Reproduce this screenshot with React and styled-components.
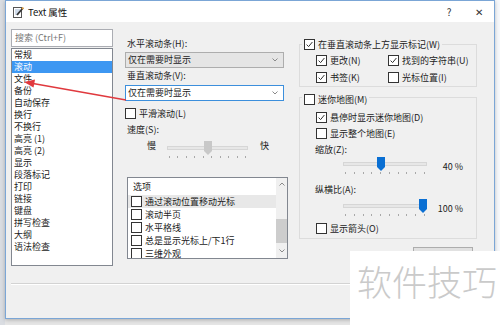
import React from 'react';
import styled, { createGlobalStyle } from 'styled-components';

const GlobalStyle = createGlobalStyle`
  html, body {
    margin: 0;
    padding: 0;
  }
  body {
    width: 500px;
    height: 325px;
    overflow: hidden;
    background: #e6e6e6;
    font-family: "Noto Sans CJK SC", "Noto Sans", sans-serif;
    font-size: 9px;
    color: #222;
  }
`;

const Screen = styled.div`
  position: relative;
  width: 500px;
  height: 325px;
  padding-left: 5px;
  box-sizing: border-box;
  background: linear-gradient(to right, #dadde2 0 5px, #e6e6e6 5px 495px, #f7f9fc 495px);
`;

const Dialog = styled.div`
  width: 490px;
  height: 319px;
  box-sizing: border-box;
  border: 1px solid #7ba6d6;
  background: #f0f0f0;
  display: flex;
  flex-direction: column;
  box-shadow: 0 1px 4px rgba(0, 0, 0, 0.25);
`;

const TitleBar = styled.div`
  height: 21px;
  background: #fff;
  display: flex;
  align-items: center;
  padding-left: 7px;
`;

const TitleText = styled.span`
  margin-left: 4px;
  font-size: 9.5px;
  color: #111;
`;

const CaptionButton = styled.div`
  width: 30px;
  height: 21px;
  display: flex;
  align-items: center;
  justify-content: center;
  color: #333;
  font-size: 10px;
  &:first-of-type {
    margin-left: auto;
  }
`;

const Body = styled.div`
  flex: 1;
  display: flex;
  flex-direction: column;
  padding: 7px 6px 0 5px;
`;

const Main = styled.div`
  display: flex;
  align-items: flex-start;
`;

const Sidebar = styled.div`
  width: 102px;
  display: flex;
  flex-direction: column;
`;

const SearchBox = styled.div`
  height: 18px;
  box-sizing: border-box;
  border: 1px solid #abadb3;
  background: #fff;
  padding-left: 3px;
  line-height: 16px;
  color: #777;
`;

const ListBox = styled.div`
  margin-top: 1px;
  height: 218px;
  box-sizing: border-box;
  border: 1px solid #828790;
  background: #fff;
`;

const ListItem = styled.div`
  height: 12px;
  line-height: 12px;
  padding-left: 2px;
  background: ${(p) => (p.$selected ? '#3d97f2' : 'transparent')};
  color: ${(p) => (p.$selected ? '#fff' : '#222')};
`;

const Middle = styled.div`
  margin-left: 12px;
  width: 163px;
  padding-top: 8px;
  display: flex;
  flex-direction: column;
`;

const FieldLabel = styled.div`
  height: ${(p) => p.$h || 14}px;
  line-height: ${(p) => p.$h || 14}px;
  margin-top: ${(p) => p.$mt || 0}px;
  padding-left: ${(p) => p.$indent || 2}px;
`;

const Dropdown = styled.div`
  width: 159px;
  height: 16px;
  box-sizing: border-box;
  margin-top: ${(p) => p.$mt || 0}px;
  border: 1px solid ${(p) => (p.$focused ? '#3c8fdc' : '#adadad')};
  background: ${(p) => (p.$focused ? '#fff' : '#e5e5e5')};
  display: flex;
  align-items: center;
  justify-content: space-between;
  padding: 0 5px 0 2px;
  line-height: 14px;
`;

const CheckRow = styled.div`
  display: flex;
  align-items: center;
  gap: 3px;
  height: ${(p) => p.$h || 14}px;
  margin-top: ${(p) => p.$mt || 0}px;
  padding-left: ${(p) => p.$indent || 0}px;
  white-space: nowrap;
`;

const Box = styled.span`
  width: 9px;
  height: 9px;
  flex: none;
  border: 1px solid #333;
  background: #fff;
  display: flex;
  align-items: center;
  justify-content: center;
`;

const SliderRow = styled.div`
  display: flex;
  align-items: flex-start;
  height: 18px;
  margin-top: ${(p) => p.$mt || 0}px;
  padding-left: ${(p) => p.$indent || 0}px;
`;

const EndLabel = styled.span`
  width: 9px;
  line-height: 14px;
  margin: ${(p) => p.$margin};
`;

const Track = styled.div`
  width: ${(p) => p.$w}px;
  display: flex;
  flex-direction: column;
`;

const RailArea = styled.div`
  position: relative;
  height: 14px;
  &::before {
    content: '';
    position: absolute;
    left: 0;
    right: 0;
    top: 5px;
    height: 2px;
    background: #e7e7e7;
    border: 1px solid #d6d6d6;
  }
`;

const ThumbWrap = styled.div`
  position: absolute;
  top: 0;
  width: 8px;
  height: 14px;
  margin-left: -4px;
`;

const Ticks = styled.div`
  margin-top: 1px;
  display: flex;
  justify-content: space-between;
  padding: 0 2px;
  span {
    width: 1px;
    height: 2px;
    background: #a8a8a8;
  }
`;

const SliderValue = styled.span`
  width: 36px;
  margin-top: 3px;
  line-height: 14px;
  text-align: right;
`;

const OptionsList = styled.div`
  margin: 18px 0 0 2px;
  width: 161px;
  height: 82px;
  box-sizing: border-box;
  border: 1px solid #828790;
  background: #fff;
  display: flex;
  overflow: hidden;
`;

const OptionsBody = styled.div`
  flex: 1;
  padding-top: 1px;
`;

const OptionsHeader = styled.div`
  height: 16px;
  line-height: 16px;
  padding-left: 5px;
`;

const OptionRow = styled.div`
  height: 13px;
  display: flex;
  align-items: center;
  gap: 3px;
  padding-left: 3px;
  background: ${(p) => (p.$hover ? '#e8e8e8' : 'transparent')};
  white-space: nowrap;
`;

const Scrollbar = styled.div`
  width: 11px;
  background: #f0f0f0;
  display: flex;
  flex-direction: column;
  align-items: center;
  padding-top: 4px;
`;

const ScrollThumb = styled.div`
  width: 11px;
  height: 24px;
  margin: 33px 0 6px;
  background: #cdcdcd;
`;

const Right = styled.div`
  margin-left: 11px;
  width: 178px;
  display: flex;
  flex-direction: column;
`;

const Group = styled.div`
  margin-top: ${(p) => p.$mt}px;
  border: 1px solid #dcdcdc;
  padding-bottom: ${(p) => p.$pb || 0}px;
  display: flex;
  flex-direction: column;
`;

const GroupHeader = styled(CheckRow)`
  height: 12px;
  width: fit-content;
  margin: ${(p) => p.$top}px 0 0 2px;
  padding: 0 2px;
  background: #f0f0f0;
`;

const CheckGrid = styled.div`
  margin-top: 2px;
  padding-left: 16px;
  display: grid;
  grid-template-columns: 72px auto;
  grid-auto-rows: 17px;
`;

const PushButton = styled.div`
  margin: 8px 0 0 114px;
  width: 60px;
  height: 22px;
  box-sizing: border-box;
  border: 1px solid #adadad;
  background: #e1e1e1;
`;

const Separator = styled.div`
  margin-top: auto;
  height: 1px;
  border-top: 1px solid #d3d3d3;
  background: #fff;
`;

const Footer = styled.div`
  height: 33px;
`;

const Watermark = styled.div`
  position: absolute;
  right: 0;
  bottom: 0;
  width: 150px;
  height: 74px;
  box-sizing: border-box;
  background: #fff;
  padding: 12px 0 0 7px;
  font-family: "Noto Sans CJK SC", sans-serif;
  font-weight: 300;
  font-size: 35px;
  line-height: 36px;
  color: #cacaca;
  white-space: nowrap;
`;

const Overlay = styled.svg`
  position: absolute;
  left: 0;
  top: 0;
  pointer-events: none;
`;

const Check = ({ checked }) => (
  <Box>
    {checked && (
      <svg width="7" height="7" viewBox="0 0 7 7">
        <path d="M0.6 3.6 L2.6 5.6 L6.4 1" fill="none" stroke="#333" strokeWidth="1" />
      </svg>
    )}
  </Box>
);

const Chevron = ({ up }) => (
  <svg width="6" height="4" viewBox="0 0 6 4">
    <path d={up ? 'M0.5 3.5 L3 1 L5.5 3.5' : 'M0.5 0.5 L3 3 L5.5 0.5'} fill="none" stroke="#8a8a8a" strokeWidth="1" />
  </svg>
);

const Slider = ({ width, value, blue }) => (
  <Track $w={width}>
    <RailArea>
      <ThumbWrap style={{ left: `${value}%` }}>
        <svg width="8" height="14" viewBox="0 0 8 14">
          <path d="M0 0 H8 V10 L4 14 L0 10 Z" fill={blue ? '#0a6fd3' : '#c8c8c8'} />
        </svg>
      </ThumbWrap>
    </RailArea>
    <Ticks>
      {Array.from({ length: 10 }).map((_, i) => (
        <span key={i} />
      ))}
    </Ticks>
  </Track>
);

const NotepadIcon = () => (
  <svg width="11" height="12" viewBox="0 0 11 12">
    <rect x="0.5" y="1.5" width="8" height="10" fill="#fff" stroke="#555" />
    <path d="M2 4 H7 M2 6 H6 M2 8 H5" stroke="#8aa4c8" strokeWidth="0.8" />
    <path d="M4 9 L10 2" stroke="#333" strokeWidth="1.8" />
    <path d="M9 3 L10.3 1.5" stroke="#e2a03f" strokeWidth="1.8" />
  </svg>
);

const categories = [
  '常规', '滚动', '文件', '备份', '自动保存', '换行', '不换行', '高亮 (1)', '高亮 (2)',
  '显示', '段落标记', '打印', '链接', '键盘', '拼写检查', '大纲', '语法检查',
];

const options = ['通过滚动位置移动光标', '滚动半页', '水平格线', '总是显示光标上/下1行', '三维外观'];

export default function App() {
  return (
    <Screen>
      <GlobalStyle />
      <Dialog>
        <TitleBar>
          <NotepadIcon />
          <TitleText>Text 属性</TitleText>
          <CaptionButton>?</CaptionButton>
          <CaptionButton>✕</CaptionButton>
        </TitleBar>
        <Body>
          <Main>
            <Sidebar>
              <SearchBox>搜索 (Ctrl+F)</SearchBox>
              <ListBox>
                {categories.map((c) => (
                  <ListItem key={c} $selected={c === '滚动'}>{c}</ListItem>
                ))}
              </ListBox>
            </Sidebar>

            <Middle>
              <FieldLabel>水平滚动条(H):</FieldLabel>
              <Dropdown $mt={1}>
                <span>仅在需要时显示</span>
                <Chevron />
              </Dropdown>
              <FieldLabel $mt={1}>垂直滚动条(V):</FieldLabel>
              <Dropdown $mt={2} $focused>
                <span>仅在需要时显示</span>
                <Chevron />
              </Dropdown>
              <CheckRow $mt={5}>
                <Check />
                <span>平滑滚动(L)</span>
              </CheckRow>
              <FieldLabel $mt={3}>速度(S):</FieldLabel>
              <SliderRow $mt={4} $indent={22}>
                <EndLabel $margin="-2px 11px 0 0">慢</EndLabel>
                <Slider width={81} value={50} />
                <EndLabel $margin="-2px 0 0 12px">快</EndLabel>
              </SliderRow>
              <OptionsList>
                <OptionsBody>
                  <OptionsHeader>选项</OptionsHeader>
                  {options.map((o, i) => (
                    <OptionRow key={o} $hover={i === 0}>
                      <Check />
                      <span>{o}</span>
                    </OptionRow>
                  ))}
                </OptionsBody>
                <Scrollbar>
                  <Chevron up />
                  <ScrollThumb />
                  <Chevron />
                </Scrollbar>
              </OptionsList>
            </Middle>

            <Right>
              <Group $mt={15}>
                <GroupHeader $top={-7}>
                  <Check checked />
                  <span>在垂直滚动条上方显示标记(W)</span>
                </GroupHeader>
                <CheckGrid>
                  <CheckRow $h={17}><Check checked /><span>更改(N)</span></CheckRow>
                  <CheckRow $h={17}><Check checked /><span>找到的字符串(U)</span></CheckRow>
                  <CheckRow $h={17}><Check checked /><span>书签(K)</span></CheckRow>
                  <CheckRow $h={17}><Check /><span>光标位置(I)</span></CheckRow>
                </CheckGrid>
              </Group>

              <Group $mt={10} $pb={2}>
                <GroupHeader $top={-5}>
                  <Check />
                  <span>迷你地图(M)</span>
                </GroupHeader>
                <CheckRow $h={16} $mt={4} $indent={16}>
                  <Check checked />
                  <span>悬停时显示迷你地图(D)</span>
                </CheckRow>
                <CheckRow $h={16} $indent={16}>
                  <Check />
                  <span>显示整个地图(E)</span>
                </CheckRow>
                <FieldLabel $h={12} $mt={3} $indent={15}>缩放(Z):</FieldLabel>
                <SliderRow $mt={1} $indent={43}>
                  <Slider width={84} value={45} blue />
                  <SliderValue>40 %</SliderValue>
                </SliderRow>
                <FieldLabel $h={12} $mt={9} $indent={15}>纵横比(A):</FieldLabel>
                <SliderRow $mt={3} $indent={43}>
                  <Slider width={84} value={95} blue />
                  <SliderValue>100 %</SliderValue>
                </SliderRow>
                <CheckRow $h={16} $mt={3} $indent={16}>
                  <Check />
                  <span>显示箭头(O)</span>
                </CheckRow>
              </Group>
              <PushButton />
            </Right>
          </Main>
          <Separator />
          <Footer />
        </Body>
      </Dialog>

      <Overlay width="500" height="325" viewBox="0 0 500 325">
        <line x1="126" y1="100" x2="33" y2="83.5" stroke="#e0393e" strokeWidth="1.6" />
        <polygon points="24,82 35,79.5 33.5,87.5" fill="#e0393e" />
      </Overlay>
      <Watermark>软件技巧</Watermark>
    </Screen>
  );
}
